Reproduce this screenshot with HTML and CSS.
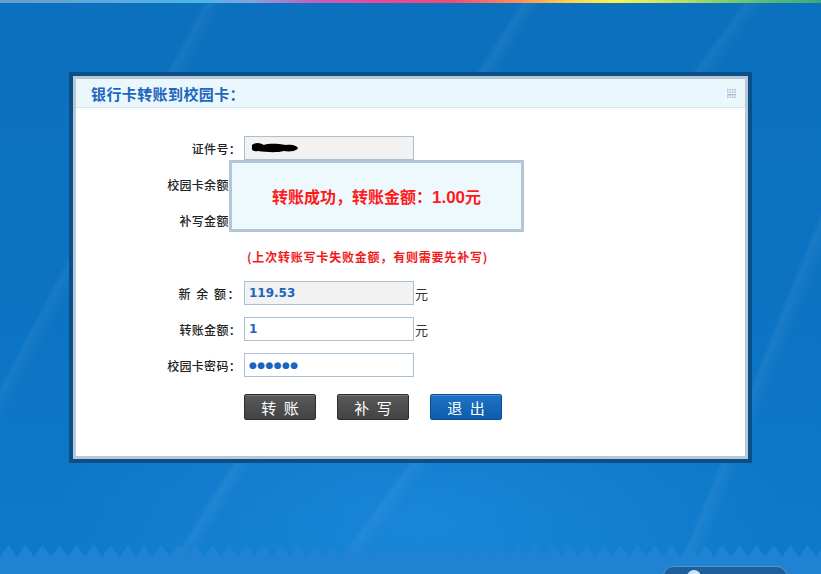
FILE: index.html
```html
<!DOCTYPE html>
<html lang="zh-CN">
<head>
<meta charset="utf-8">
<title>银行卡转账到校园卡</title>
<link rel="stylesheet" href="styles.css">
</head>
<body>
<div class="rainbow"></div>
<div class="streaks"></div>
<main class="stage">
  <section class="frame">
    <div class="panel">
      <header class="panel-head">
        <h1 class="panel-title">银行卡转账到校园卡：</h1>
        <svg class="grip" width="9" height="9" viewBox="0 0 9 9">
          <g fill="#a9bfd3">
            <rect x="0" y="0" width="1.5" height="1.5"/><rect x="2.5" y="0" width="1.5" height="1.5"/><rect x="5" y="0" width="1.5" height="1.5"/><rect x="7.5" y="0" width="1.5" height="1.5"/>
            <rect x="0" y="2.5" width="1.5" height="1.5"/><rect x="2.5" y="2.5" width="1.5" height="1.5"/><rect x="5" y="2.5" width="1.5" height="1.5"/><rect x="7.5" y="2.5" width="1.5" height="1.5"/>
            <rect x="0" y="5" width="9" height="1.5"/>
            <rect x="0" y="7.5" width="1.5" height="1.5"/><rect x="2.5" y="7.5" width="1.5" height="1.5"/><rect x="5" y="7.5" width="1.5" height="1.5"/><rect x="7.5" y="7.5" width="1.5" height="1.5"/>
          </g>
        </svg>
      </header>
      <form class="form">
        <label class="lbl">证件号：</label>
        <div class="field field-ro">
          <svg class="redact" width="50" height="14" viewBox="0 0 50 14">
            <path d="M2 4 C6 1 10 2 14 4 C20 2 28 3 36 4 C42 3 47 5 48 7 C47 10 40 11 34 10 C26 12 16 11 8 10 C4 11 1 9 2 7 Z" fill="#000"/>
          </svg>
        </div>
        <span class="unit"></span>

        <label class="lbl">校园卡余额：</label>
        <div class="field field-ro"></div>
        <span class="unit">元</span>

        <label class="lbl">补写金额：</label>
        <div class="field field-ro"></div>
        <span class="unit">元</span>

        <p class="note">(上次转账写卡失败金额，有则需要先补写)</p>

        <label class="lbl lbl-spaced">新 余 额：</label>
        <input class="field field-ro val" type="text" value="119.53" readonly>
        <span class="unit">元</span>

        <label class="lbl">转账金额：</label>
        <input class="field val" type="text" value="1">
        <span class="unit">元</span>

        <label class="lbl">校园卡密码：</label>
        <input class="field val dots" type="text" value="●●●●●●">
        <span class="unit"></span>

        <div class="buttons">
          <button type="button" class="btn btn-dark">转 账</button>
          <button type="button" class="btn btn-dark">补 写</button>
          <button type="button" class="btn btn-blue">退 出</button>
        </div>
      </form>
    </div>
    <div class="popup">
      <p class="popup-text">转账成功，转账金额：<b class="amt">1.00</b>元</p>
    </div>
  </section>
</main>
<div class="ground">
  <svg class="zigzag" width="100%" height="30" preserveAspectRatio="none">
    <defs>
      <pattern id="zz" width="17" height="30" patternUnits="userSpaceOnUse">
        <polygon points="0,13 8.5,1 17,13 17,30 0,30" fill="#1f82d2"/>
      </pattern>
    </defs>
    <rect x="0" y="0" width="100%" height="30" fill="url(#zz)"/>
  </svg>
  <div class="pill">
    <svg width="16" height="16" viewBox="0 0 16 16" class="globe">
      <circle cx="8" cy="8" r="7" fill="#cfe3f5"/>
      <path d="M3 6 C6 4 9 9 13 7 M5 12 C7 10 10 13 12 11" stroke="#2a6aa8" stroke-width="1.5" fill="none"/>
    </svg>
  </div>
</div>
</body>
</html>
```
FILE: styles.css
```css
html, body {
  margin: 0;
  height: 100%;
  overflow: hidden;
}
body {
  position: relative;
  background:
    radial-gradient(ellipse 520px 260px at 420px 520px, rgba(40,150,235,0.45), rgba(40,150,235,0) 70%),
    linear-gradient(180deg, #0b70be 0%, #0c74c4 60%, #0e7acb 100%);
  font-family: "Noto Sans CJK SC", "Noto Sans", sans-serif;
}
.rainbow {
  height: 3px;
  background: linear-gradient(90deg, #6c9ccc 0%, #4cb6e6 25%, #8aa0dc 31%, #c060c0 38%, #ea4a9c 45%, #f24c74 55%, #ff8e58 63%, #ffd84c 70%, #fbf458 75%, #b8e068 83%, #5cc07a 92%, #3aa87e 100%);
}
.streaks {
  position: absolute;
  inset: 3px 0 0 0;
  background:
    linear-gradient(118deg, transparent 0 18%, rgba(255,255,255,0.05) 18.5%, transparent 20%),
    linear-gradient(122deg, transparent 0 44%, rgba(255,255,255,0.06) 44.6%, transparent 46%),
    linear-gradient(126deg, transparent 0 60%, rgba(255,255,255,0.05) 60.5%, transparent 62%),
    linear-gradient(112deg, transparent 0 86%, rgba(255,255,255,0.06) 86.5%, transparent 88%);
  pointer-events: none;
}
.stage {
  position: relative;
  padding: 69px 0 0 69px;
}
.frame {
  position: relative;
  width: 669px;
  border: 4px solid #0b4f86;
  background: #b6c9d9;
  padding: 3px;
}
.panel {
  background: #fff;
  height: 377px;
  display: flex;
  flex-direction: column;
}
.panel-head {
  height: 28px;
  background: #eaf7fd;
  border-bottom: 1px solid #d6e6ef;
  display: flex;
  align-items: center;
  justify-content: space-between;
  padding: 0 9px 0 15px;
}
.panel-title {
  margin: 0;
  font-size: 15px;
  font-weight: bold;
  color: #1d68bd;
  letter-spacing: 0.4px;
}
.grip {
  display: block;
}
.form {
  display: grid;
  grid-template-columns: 165px 170px 30px;
  grid-template-rows: 24px 24px 24px 25px 24px 24px 24px auto;
  row-gap: 12px;
  column-gap: 3px;
  padding-top: 28px;
  margin: 0;
  align-items: center;
}
.lbl {
  justify-self: end;
  font-size: 12px;
  font-weight: 500;
  color: #222;
  letter-spacing: 0.3px;
  white-space: nowrap;
}
.lbl-spaced {
  letter-spacing: 1.5px;
}
.field {
  box-sizing: border-box;
  width: 170px;
  height: 24px;
  margin: 0;
  border: 1px solid #a9c0d4;
  background: #fff;
  padding: 0 4px;
  font-family: "DejaVu Sans", sans-serif;
  font-size: 12px;
  font-weight: bold;
  color: #1b64bd;
  outline: none;
  display: flex;
  align-items: center;
}
.field-ro {
  background: #f2f2f2;
}
.redact {
  display: block;
  margin-left: 1px;
}
.dots {
  font-size: 9px;
  letter-spacing: 0.4px;
}
.unit {
  font-size: 13px;
  color: #333;
  margin-left: -2px;
}
.note {
  grid-column: 2 / 4;
  margin: 0;
  font-size: 12px;
  font-weight: bold;
  color: #f01c1c;
  white-space: nowrap;
  padding-left: 3px;
  letter-spacing: 0.8px;
}
.buttons {
  grid-column: 2 / 4;
  display: flex;
  gap: 21px;
  margin-top: 5px;
}
.btn {
  flex: none;
  width: 72px;
  height: 26px;
  border-radius: 2px;
  font-family: "Noto Sans CJK SC", sans-serif;
  font-size: 15px;
  color: #fff;
  letter-spacing: 2px;
  padding: 0 0 0 2px;
  cursor: pointer;
}
.btn-dark {
  background: linear-gradient(180deg, #5a5a5a, #434343);
  border: 1px solid #2e2e2e;
  box-shadow: inset 0 1px 0 #777;
}
.btn-blue {
  background: linear-gradient(180deg, #1e73c6, #0e5cab);
  border: 1px solid #0a4d91;
  box-shadow: inset 0 1px 0 #4a90d6;
}
.popup {
  position: absolute;
  left: 156px;
  top: 84px;
  width: 289px;
  height: 66px;
  border: 3px solid #b2c6d8;
  background: #eef9fe;
  display: flex;
  align-items: center;
  justify-content: center;
}
.popup-text {
  margin: 0;
  font-size: 16px;
  font-weight: bold;
  color: #ff1a1a;
}
.amt {
  font-family: "Liberation Sans", sans-serif;
  font-size: 17px;
}
.ground {
  position: absolute;
  left: 0;
  right: 0;
  bottom: 0;
  height: 30px;
}
.zigzag {
  display: block;
}
.pill {
  position: absolute;
  left: 663px;
  top: 22px;
  width: 122px;
  height: 20px;
  border-radius: 10px;
  background: #1d5f9c;
  border: 1px solid #5c95c9;
}
.globe {
  position: absolute;
  left: 22px;
  top: 2px;
}
```
